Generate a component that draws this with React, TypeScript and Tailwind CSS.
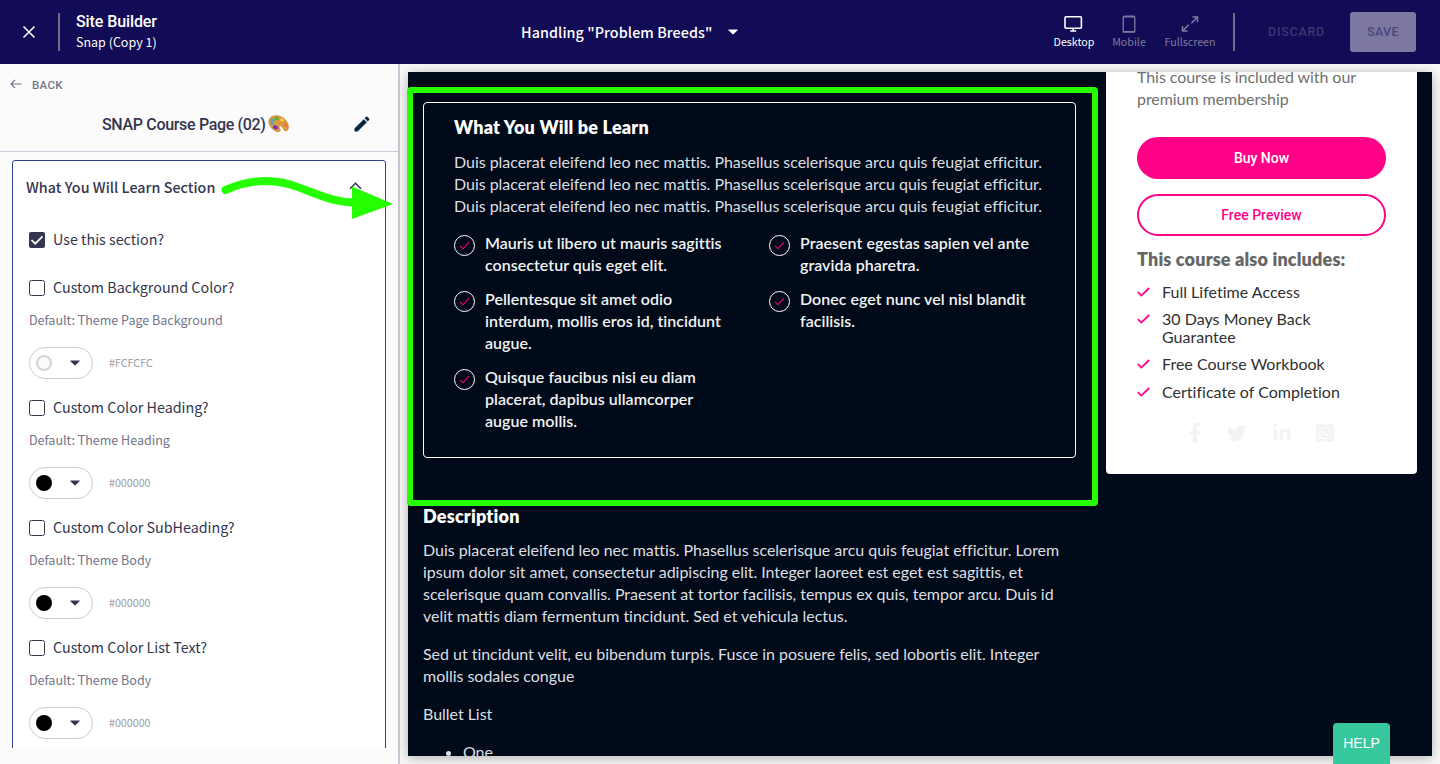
import React from "react";
import { MdEdit } from "react-icons/md";
import { FaFacebookF, FaLinkedinIn, FaTwitter, FaWhatsappSquare } from "react-icons/fa";

const settings = [
  { label: "Custom Background Color?", note: "Default: Theme Page Background", color: "#FCFCFC", light: true },
  { label: "Custom Color Heading?", note: "Default: Theme Heading", color: "#000000", light: false },
  { label: "Custom Color SubHeading?", note: "Default: Theme Body", color: "#000000", light: false },
  { label: "Custom Color List Text?", note: "Default: Theme Body", color: "#000000", light: false },
];

const learnLeft = [
  ["Mauris ut libero ut mauris sagittis", "consectetur quis eget elit."],
  ["Pellentesque sit amet odio", "interdum, mollis eros id, tincidunt", "augue."],
  ["Quisque faucibus nisi eu diam", "placerat, dapibus ullamcorper", "augue mollis."],
];

const learnRight = [
  ["Praesent egestas sapien vel ante", "gravida pharetra."],
  ["Donec eget nunc vel nisl blandit", "facilisis."],
];

const includes = [
  { lines: ["Full Lifetime Access"], gap: "mb-[9px]" },
  { lines: ["30 Days Money Back", "Guarantee"], gap: "mb-[9px]" },
  { lines: ["Free Course Workbook"], gap: "mb-[10px]" },
  { lines: ["Certificate of Completion"], gap: "mb-0" },
];

function Lines({ lines }: { lines: string[] }) {
  return (
    <>
      {lines.map((line, i) => (
        <span key={i} className="block whitespace-nowrap">
          {line}
        </span>
      ))}
    </>
  );
}

function Caret({ className }: { className: string }) {
  return (
    <svg className={className} width="10" height="6" viewBox="0 0 10 6" fill="currentColor">
      <path d="M.9.4h8.2c.5 0 .7.5.4.9L5.7 5.1a1 1 0 0 1-1.4 0L.5 1.3C.2.9.4.4.9.4Z" />
    </svg>
  );
}

function Palette() {
  return (
    <svg width="21" height="18" viewBox="0 0 21 18">
      <path
        d="M1.2 4.6C2.8.8 8-.4 13 1.8c4.8 2.1 8 6.900 7.300 11.300-.4 2.500-2.200 3.600-3.600 2.500-1.600-1.200-1.700-4.200-3.900-4.900-1.700-.5-2.300 1-1.300 2.300 1.500 2 .8 3.700-1.500 3.700C5 16.500-.7 9.300 1.200 4.600Z"
        fill="#dc9a3c"
        stroke="#b87422"
        strokeWidth=".6"
      />
      <ellipse cx="8.6" cy="3.6" rx="2.1" ry="1.5" fill="#43b649" />
      <ellipse cx="4.4" cy="5.3" rx="1.9" ry="1.5" fill="#2fb4dc" />
      <ellipse cx="4" cy="8.6" rx="1.3" ry="1.3" fill="#3aa0e0" />
      <ellipse cx="7.4" cy="12.3" rx="2.6" ry="1.9" fill="#7a2bc4" transform="rotate(25 7.4 12.3)" />
      <ellipse cx="14" cy="5" rx="1.9" ry="1.3" fill="#f6d84a" transform="rotate(30 14 5)" />
      <ellipse cx="17.6" cy="10.3" rx="1.2" ry="2.2" fill="#f4694b" transform="rotate(-30 17.6 10.3)" />
    </svg>
  );
}

function Header() {
  return (
    <header className="flex h-16 w-full shrink-0 items-center bg-[#120b55] text-white">
      <svg className="ml-[22px] shrink-0" width="14" height="14" viewBox="0 0 14 14" stroke="currentColor" strokeWidth="1.5">
        <path d="M1.500 1.500l11 11M12.500 1.500l-11 11" />
      </svg>
      <div className="ml-[22px] h-[38px] w-0.5 shrink-0 bg-[#716f8a]" />
      <div className="ml-4 w-[445px] shrink-0">
        <div className="font-['Roboto',sans-serif] text-[16px] leading-[22px] font-medium tracking-[-0.1px]">Site Builder</div>
        <div className="-mt-px mb-px font-['Noto_Sans_CJK_JP',sans-serif] text-[12.5px] leading-5">Snap (Copy 1)</div>
      </div>
      <div className="flex w-[532px] shrink-0 items-center">
        <div className="font-['Noto_Sans_CJK_JP',sans-serif] text-[14.3px] leading-6 font-medium tracking-[0.08px]">Handling "Problem Breeds"</div>
        <Caret className="ml-4" />
      </div>
      <div className="flex shrink-0 font-['Noto_Sans_CJK_JP',sans-serif] text-[10.7px] leading-4">
        <div className="flex w-[42px] flex-col items-center">
          <svg width="20" height="18" viewBox="0 0 20 18" fill="none" stroke="currentColor" strokeWidth="1.6">
            <rect x="1" y="1.8" width="16.400" height="11.400" rx="1" />
            <path d="M9.200 13v3M6.200 16h6" />
          </svg>
          <span className="mt-px">Desktop</span>
        </div>
        <div className="ml-[17px] flex w-[34px] flex-col items-center text-[#7f7b9f]">
          <svg width="18" height="18" viewBox="0 0 18 18" fill="none" stroke="currentColor" strokeWidth="1.3">
            <rect x="3.2" y="1.200" width="11.600" height="16" rx="1.200" />
            <path d="M3 1.800h12M3 16.600h12" />
          </svg>
          <span className="mt-px">Mobile</span>
        </div>
        <div className="ml-[18px] flex w-[52px] flex-col items-center text-[#7f7b9f]">
          <svg width="18" height="18" viewBox="0 0 18 18" fill="none" stroke="currentColor" strokeWidth="1.5">
            <path d="M11.500 2h5v5M16.300 2.200l-6 6M6.500 16h-5v-5M1.700 15.800l6-6" />
          </svg>
          <span className="mt-px">Fullscreen</span>
        </div>
      </div>
      <div className="ml-[17px] h-[38px] w-0.5 shrink-0 bg-[#716f8a]" />
      <div className="mt-px ml-[33px] w-[57px] shrink-0 font-['Roboto',sans-serif] text-[12.5px] font-medium tracking-[0.75px] text-[#3d3873]">DISCARD</div>
      <button className="ml-[25px] h-10 w-[66px] shrink-0 rounded-[3px] bg-[#7c78a2] pt-px font-['Roboto',sans-serif] text-[12.5px] font-medium tracking-[0.4px] text-[#4b4681]">
        SAVE
      </button>
    </header>
  );
}

function Checkbox({ checked }: { checked: boolean }) {
  return checked ? (
    <span className="flex size-4 items-center justify-center rounded-[2px] bg-[#34364f]">
      <svg width="14" height="12" viewBox="0 0 14 12" fill="none" stroke="white" strokeWidth="1.7">
        <path d="M1.500 6l3.700 3.700L12.500 2.300" />
      </svg>
    </span>
  ) : (
    <span className="size-4 rounded-[2.5px] border-[1.5px] border-[#34364f] bg-white" />
  );
}

function Sidebar() {
  return (
    <aside className="flex w-[400px] shrink-0 flex-col border-r-2 border-[#cbcad8] bg-[#fbfbfb] font-['Noto_Sans_CJK_JP',sans-serif] text-[#34364f]">
      <div className="h-[88px] shrink-0 border-b border-[#cbcad8]">
        <div className="flex h-10 items-center pl-[10px] text-[#73748a]">
          <svg width="12" height="10" viewBox="0 0 12 10" fill="none" stroke="currentColor" strokeWidth="1.200">
            <path d="M5 1L1 5l4 4M1 5h10.500" />
          </svg>
          <span className="mt-[3px] ml-[10px] font-['Roboto',sans-serif] text-[11.500px] font-medium tracking-[0.3px]">BACK</span>
        </div>
        <div className="flex h-10 items-center pl-[102px]">
          <span className="mt-0.5 w-[166px] font-['Roboto',sans-serif] text-[16px] font-medium tracking-[-0.33px] whitespace-nowrap">SNAP Course Page (02)</span>
          <Palette />
          <MdEdit className="ml-[63px] size-5 text-[#062846]" />
        </div>
      </div>
      <div className="mx-3 mt-2 mb-4 min-h-0 flex-1 overflow-hidden">
        <div className="h-[700px] rounded-[3px] border border-[#363c94] bg-white">
          <div className="flex h-[54px] items-center justify-between pr-[23px] pl-[13px]">
            <h2 className="-mt-[3px] text-[14.3px] leading-6 font-medium tracking-[0.03px]">What You Will Learn Section</h2>
            <svg className="mt-[-5px]" width="13" height="8" viewBox="0 0 13 8" fill="none" stroke="currentColor" strokeWidth="1.5">
              <path d="M1 6.800L6.500 1.200 12 6.800" />
            </svg>
          </div>
          <div className="pl-4">
            <div className="mt-[13px] flex h-6 items-center gap-2 text-[14.3px]">
              <Checkbox checked />
              <span className="-mt-[2px] leading-5">Use this section?</span>
            </div>
            <div className="mt-6">
              {settings.map((item) => (
                <div key={item.label} className="h-[120px]">
                  <div className="flex h-6 items-center gap-2 text-[14.3px]">
                    <Checkbox checked={false} />
                    <span className="-mt-[2px] leading-5">{item.label}</span>
                  </div>
                  <div className="mt-[10px] text-[12.53px] leading-5 text-[#73748a]">{item.note}</div>
                  <div className="mt-[17px] flex items-center">
                    <div className="flex h-8 w-16 items-center rounded-full border border-[#cbcad8] pl-1.5 text-[#34364f]">
                      <span className={item.light ? "size-4 rounded-full border-2 border-[#d4d4d4] bg-[#fcfcfc]" : "size-4 rounded-full bg-black"} />
                      <Caret className="ml-[18px]" />
                    </div>
                    <span className="ml-4 text-[10.7px] leading-4 text-[#9b9ba9]">{item.color}</span>
                  </div>
                </div>
              ))}
            </div>
          </div>
        </div>
      </div>
    </aside>
  );
}

function LearnItem({ lines }: { lines: string[] }) {
  return (
    <li className="flex gap-[10px]">
      <span className="mt-[3px] flex size-[21px] shrink-0 items-center justify-center rounded-full border border-white">
        <svg width="11" height="9" viewBox="0 0 11 9" fill="none" stroke="#f0047f" strokeWidth="1.1">
          <path d="M1 4.800l3 3L10 1.200" />
        </svg>
      </span>
      <span>
        <Lines lines={lines} />
      </span>
    </li>
  );
}

function MainColumn() {
  return (
    <main className="w-[653px] shrink-0 text-[16px] leading-[22px] text-[#dddfe2]">
      <section className="mt-[30px] h-[356px] rounded-[4px] border border-white px-[30px] pt-[13px]">
        <h3 className="text-[18px] leading-[22px] font-extrabold tracking-[0.2px] text-white">What You Will be Learn</h3>
        <p className="mt-[13px] tracking-[-0.035px]">
          <Lines
            lines={[
              "Duis placerat eleifend leo nec mattis. Phasellus scelerisque arcu quis feugiat efficitur.",
              "Duis placerat eleifend leo nec mattis. Phasellus scelerisque arcu quis feugiat efficitur.",
              "Duis placerat eleifend leo nec mattis. Phasellus scelerisque arcu quis feugiat efficitur.",
            ]}
          />
        </p>
        <div className="mt-[15px] grid grid-cols-[315px_1fr] font-semibold tracking-[0.03px] text-[#f2f3f4]">
          <ul className="flex flex-col gap-3">
            {learnLeft.map((lines) => (
              <LearnItem key={lines[0]} lines={lines} />
            ))}
          </ul>
          <ul className="flex flex-col gap-3">
            {learnRight.map((lines) => (
              <LearnItem key={lines[0]} lines={lines} />
            ))}
          </ul>
        </div>
      </section>
      <section className="mt-[47px] tracking-[-0.03px]">
        <h3 className="text-[18px] leading-[22px] font-extrabold tracking-[0.2px] text-white">Description</h3>
        <p className="mt-3">
          <Lines
            lines={[
              "Duis placerat eleifend leo nec mattis. Phasellus scelerisque arcu quis feugiat efficitur. Lorem",
              "ipsum dolor sit amet, consectetur adipiscing elit. Integer laoreet est eget est sagittis, et",
              "scelerisque quam convallis. Praesent at tortor facilisis, tempus ex quis, tempor arcu. Duis id",
              "velit mattis diam fermentum tincidunt. Sed et vehicula lectus.",
            ]}
          />
        </p>
        <p className="mt-4">
          <Lines
            lines={[
              "Sed ut tincidunt velit, eu bibendum turpis. Fusce in posuere felis, sed lobortis elit. Integer",
              "mollis sodales congue",
            ]}
          />
        </p>
        <p className="mt-4">Bullet List</p>
        <ul className="mt-4 list-disc pl-10">
          <li>One</li>
        </ul>
      </section>
    </main>
  );
}

function CourseCard() {
  return (
    <aside className="ml-[30px] h-[402px] w-[311px] shrink-0 rounded-b-[4px] bg-white px-[31px]">
      <p className="mt-[-6px] text-[16px] leading-[22px] tracking-[-0.06px] text-[#707070]">
        <Lines lines={["This course is included with our", "premium membership"]} />
      </p>
      <button className="mt-[27px] block h-[42px] w-full rounded-full bg-[#ff0087] font-['Roboto',sans-serif] text-[14px] font-medium text-white">Buy Now</button>
      <button className="mt-[15px] block h-[42px] w-full rounded-full border-2 border-[#ff0087] bg-white font-['Roboto',sans-serif] text-[14px] font-medium text-[#ff0087]">
        Free Preview
      </button>
      <h3 className="mt-3 text-[18px] leading-[22px] font-extrabold tracking-[0.16px] text-[#666]">This course also includes:</h3>
      <ul className="mt-[13px] text-[16px] leading-[18px] tracking-[0.02px] text-[#303030]">
        {includes.map((item) => (
          <li key={item.lines[0]} className={`flex ${item.gap}`}>
            <svg className="mt-[4px] mr-3 shrink-0" width="13" height="10" viewBox="0 0 13 10" fill="none" stroke="#ff0087" strokeWidth="1.8">
              <path d="M.8 5.200l3.500 3.400L12.200 1" />
            </svg>
            <span>
              <Lines lines={item.lines} />
            </span>
          </li>
        ))}
      </ul>
      <div className="mt-[23px] flex h-[18px] items-center text-[#f3f3f3]">
        <FaFacebookF className="ml-[48px] size-[20px]" />
        <FaTwitter className="ml-[22px] size-[20px]" />
        <FaLinkedinIn className="ml-[25px] size-[20px]" />
        <FaWhatsappSquare className="ml-[23px] size-[20px]" />
      </div>
    </aside>
  );
}

export default function App() {
  return (
    <div className="relative flex h-[764px] w-[1440px] flex-col overflow-hidden">
      <Header />
      <div className="flex min-h-0 flex-1">
        <Sidebar />
        <div className="min-w-0 flex-1 bg-[#f9f9f9] p-2">
          <div className="h-[684px] w-[1024px] shadow-[0_2px_12px_rgba(0,0,0,0.3)]">
            <div className="flex h-full items-start overflow-hidden bg-[#000a18] pl-[15px] font-['Lato',sans-serif]">
              <MainColumn />
              <CourseCard />
            </div>
          </div>
        </div>
      </div>
      <div className="absolute top-[87px] left-[407px] h-[419px] w-[691px] rounded-[4px] border-[6px] border-[#26ff00]" />
      <svg className="absolute top-[170px] left-[212px]" width="190" height="56" viewBox="212 170 190 56">
        <path d="M225.500 190C246 181 268 178 290 184.500C312 191 330 202.500 354 202.500" fill="none" stroke="#26ff00" strokeWidth="8" strokeLinecap="round" />
        <path d="M352 186.500L393 204L352 219Z" fill="#26ff00" />
      </svg>
      <button className="absolute top-[723px] left-[1333px] h-[45px] w-[57px] rounded-[4px] bg-[#38c89d] pb-[5px] font-['Liberation_Sans',sans-serif] text-[14px] text-white">HELP</button>
    </div>
  );
}
